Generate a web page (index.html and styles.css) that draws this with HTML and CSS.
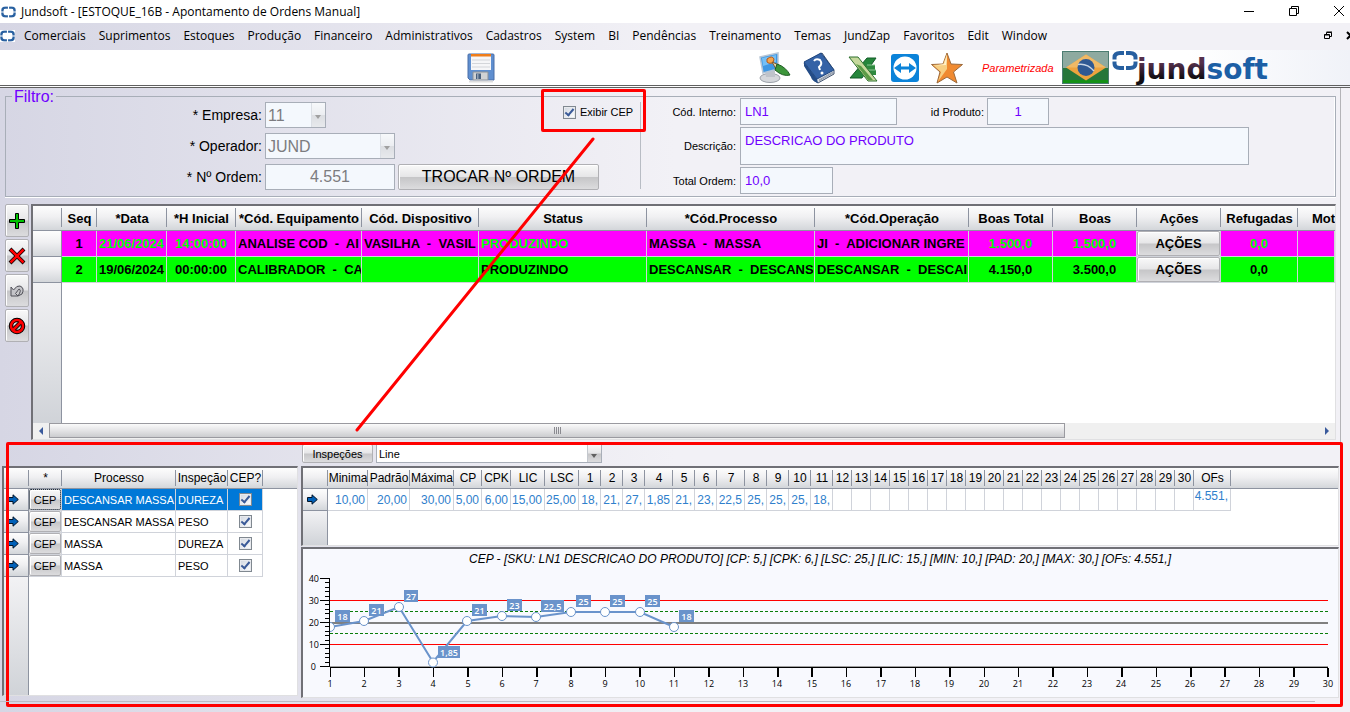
FILE: index.html
```html
<!DOCTYPE html>
<html lang="pt-BR">
<head>
<meta charset="utf-8">
<title>Jundsoft - [ESTOQUE_16B - Apontamento de Ordens Manual]</title>
<link rel="stylesheet" href="styles.css">
</head>
<body>
<svg class="defs" aria-hidden="true">
  <symbol id="ring" viewBox="0 0 26 20">
    <path d="M12 2.500H8Q2.500 2.500 2.500 7V9M2.500 11V13Q2.500 17.500 8 17.500H12M14 2.500H18Q23.500 2.500 23.500 7V9M23.500 11V13Q23.500 17.500 18 17.500H14" fill="none" stroke="#2860a0" stroke-width="4"/>
  </symbol>
  <symbol id="arrow" viewBox="0 0 11 11">
    <path d="M.5 3.500H5V.8L10.300 5.500 5 10.200V7.500H.5Z" fill="#0060b8" stroke="#001428"/>
  </symbol>
</svg>

<header class="titlebar">
  <svg class="ring-sm" viewBox="0 0 26 20"><use href="#ring"/></svg>
  <h1>Jundsoft - [ESTOQUE_16B - Apontamento de Ordens Manual]</h1>
  <div class="window-buttons">
    <button aria-label="Minimizar"><svg width="12" height="12" viewBox="0 0 12 12"><path d="M1 6.500H11" stroke="#000"/></svg></button>
    <button aria-label="Restaurar"><svg width="12" height="12" viewBox="0 0 12 12"><path d="M1.500 3.500H8.500V10.500H1.500ZM3.500 3V1.500H10.500V8.500H9" fill="none" stroke="#000"/></svg></button>
    <button aria-label="Fechar"><svg width="12" height="12" viewBox="0 0 12 12"><path d="M1 1L11 11M11 1L1 11" stroke="#000"/></svg></button>
  </div>
</header>

<nav class="menubar">
  <svg class="ring-sm boxed" viewBox="0 0 26 20"><use href="#ring"/></svg>
  <a href="#">Comerciais</a><a href="#">Suprimentos</a><a href="#">Estoques</a><a href="#">Produção</a><a href="#">Financeiro</a><a href="#">Administrativos</a><a href="#">Cadastros</a><a href="#">System</a><a href="#">BI</a><a href="#">Pendências</a><a href="#">Treinamento</a><a href="#">Temas</a><a href="#">JundZap</a><a href="#">Favoritos</a><a href="#">Edit</a><a href="#">Window</a>
  <div class="mdi-buttons">
    <button aria-label="Restaurar janela"><svg width="9" height="9" viewBox="0 0 9 9"><path d="M.5 3.500H5.500V7.500H.5ZM.5 4H5.500M2.500 3V1.500H7.500V5.500H6M2.500 1H8" fill="none" stroke="#000"/></svg></button>
    <button aria-label="Fechar janela"><svg width="9" height="9" viewBox="0 0 9 9"><path d="M1 1L8 8M8 1L1 8" stroke="#000" stroke-width="2"/></svg></button>
  </div>
</nav>

<div class="toolbar">
  <button class="save" aria-label="Salvar">
    <svg width="28" height="30" viewBox="0 0 28 30">
      <path d="M1 2Q1 1 2 1H26Q27 1 27 2V27H3L1 25Z" fill="#5f8fd0" stroke="#4a6fa8"/>
      <path d="M4 1H24V17H4Z" fill="#f6f6f8"/><path d="M4 1H24V3.500H4Z" fill="#ef7d1a"/>
      <path d="M5 7H23M5 10.500H23M5 14H23" stroke="#d4d6da"/>
      <path d="M6 19H21V27H6Z" fill="#d0d2d4" stroke="#8a9098"/><path d="M9 20.500H14V26H9Z" fill="#48607e"/><path d="M10 21H11.500V26H10Z" fill="#90a0b4"/>
      <path d="M2 28.500H26" stroke="#ddd" stroke-width="2"/>
    </svg>
  </button>
  <div class="apps">
    <button aria-label="Personalizar">
      <svg width="32" height="32" viewBox="0 0 32 32">
        <ellipse cx="11" cy="26" rx="10" ry="4.500" fill="#d5d7db" stroke="#9ba0a8"/>
        <path d="M6 19L16 18V25H7Z" fill="#bfc3ca"/>
        <path d="M1 5L19 1V17L4 21Z" fill="#3f97e2" stroke="#b7c6d6" stroke-width="1.500"/>
        <path d="M3 6L17 3V10L4 14Z" fill="#75bff5"/>
        <path d="M8 7Q13 3 15 7L14 11Q9 12 8 10Z" fill="#f4a64b" stroke="#b4571b"/>
        <path d="M13 10L20 13 17 17Z" fill="#e8d5a7" stroke="#805c33"/>
        <path d="M18 12Q27 15 31 23Q24 25 16 18Z" fill="#3d963b" stroke="#1f5c23"/>
      </svg>
    </button>
    <button aria-label="Ajuda">
      <svg width="32" height="32" viewBox="0 0 32 32">
        <path d="M1 11L19 1 31 18V22L15 31Q10 29 9 25Z" fill="#dde2ea" stroke="#43546e"/>
        <path d="M1 10L18 1 31 18 14 27Z" fill="#3462a6" stroke="#21477f"/>
        <path d="M1 10L14 27 15 31Q9 29 8 25L1 14Z" fill="#234c87"/>
        <path d="M16 29L30 21M16 28L30 20" stroke="#929caa"/>
        <path d="M11 9Q13 6 17 8Q20 12 16 15L17 18" fill="none" stroke="#fff" stroke-width="2"/><circle cx="19" cy="21" r="1.500" fill="#fff"/>
      </svg>
    </button>
    <button aria-label="Excel">
      <svg width="32" height="32" viewBox="0 0 32 32">
        <path d="M20 6H29L15 26H3Z" fill="#25863b" stroke="#125c28"/>
        <path d="M18 13H28V18H29V23H16Z" fill="#2f8a3f"/>
        <path d="M20 13H28M18 18H29" stroke="#8cc695"/>
        <path d="M2 5H11L30 29H21Z" fill="#c6d99d" stroke="#2e702e"/>
        <path d="M14 14L26 28H21L9 12Z" fill="#5b9b45"/>
      </svg>
    </button>
    <button aria-label="Acesso remoto">
      <svg width="28" height="28" viewBox="0 0 28 28">
        <rect width="28" height="28" rx="3" fill="#0b83d9"/><circle cx="14" cy="14" r="11.500" fill="#fff"/>
        <path d="M3 14L10 9V12.500H18V9L25 14 18 19V15.500H10V19Z" fill="#0b83d9"/>
      </svg>
    </button>
    <button aria-label="Favoritos">
      <svg width="32" height="32" viewBox="0 0 32 32">
        <path d="M16 1L20 12 31.500 12.500 22.500 20 26 31 16 25 6 31 9 20 .5 12.500 12 12Z" fill="#f08a30" stroke="#9b6a3c"/>
        <path d="M16 2V17L7 29.500 10 20 2 13 12 12.500Z" fill="#f7cf83"/><path d="M16 3L15 13 4 13.500 13 12Z" fill="#fff1c9"/>
      </svg>
    </button>
  </div>
  <span class="mode">Parametrizada</span>
  <svg class="flag" width="47" height="33" viewBox="0 0 47 33" role="img" aria-label="Brasil">
    <rect x=".5" y=".5" width="46" height="32" fill="#26763b" stroke="#4c7d72"/>
    <path d="M1 1H46V17H1Z" fill="#8eaaa0"/><path d="M1 29H46V32H1Z" fill="#159017"/>
    <path d="M4 16.500L24 3.500 44 16.500 24 29.500Z" fill="#eda33e"/><path d="M4 16.500L24 3.500 44 16.500Z" fill="#efb966"/>
    <circle cx="24" cy="16.500" r="8.500" fill="#2f5993"/><path d="M16 13.500Q25 12 32 20" fill="none" stroke="#c8d5e4" stroke-width="1.500"/>
  </svg>
  <svg class="logo" width="160" height="35" viewBox="0 0 160 35" role="img" aria-label="jundsoft">
    <defs><linearGradient id="ink" x1="0" y1="0" x2="0" y2="1"><stop offset=".3" stop-color="#54304c"/><stop offset=".75" stop-color="#130e14"/></linearGradient></defs>
    <use href="#ring" x="2" y="0" width="26" height="21"/>
    <text x="27" y="29" class="logo-text"><tspan fill="url(#ink)">jund</tspan><tspan fill="#1c5fa5">soft</tspan></text>
  </svg>
</div>

<main class="workspace">
  <fieldset class="filter">
    <legend>Filtro:</legend>
    <div class="filter-body">
      <div class="order-fields">
        <label for="empresa">* Empresa:</label>
        <span class="combo combo-sm"><select id="empresa" disabled><option>11</option></select></span>
        <label for="operador">* Operador:</label>
        <span class="combo combo-md"><select id="operador" disabled><option>JUND</option></select></span>
        <label for="ordem">* Nº Ordem:</label>
        <div class="pair">
          <input id="ordem" class="order-no" value="4.551" disabled>
          <button class="btn swap">TROCAR Nº ORDEM</button>
        </div>
      </div>
      <div class="cep-toggle">
        <label class="check-label"><input type="checkbox" class="check" checked>Exibir CEP</label>
      </div>
      <div class="product-fields">
        <label for="interno">Cód. Interno:</label>
        <div class="pair">
          <input id="interno" class="code" value="LN1">
          <label for="idprod" class="id-label">id Produto:</label>
          <input id="idprod" class="prod-id" value="1">
        </div>
        <label for="descricao">Descrição:</label>
        <textarea id="descricao">DESCRICAO DO PRODUTO</textarea>
        <label for="total">Total Ordem:</label>
        <input id="total" class="total" value="10,0">
      </div>
    </div>
  </fieldset>

  <div class="orders">
    <div class="side-buttons">
      <button class="btn" aria-label="Adicionar"><svg width="18" height="18" viewBox="0 0 18 18"><path d="M7.500 1.500H10.500V7.500H16.500V10.500H10.500V16.500H7.500V10.500H1.500V7.500H7.500Z" fill="#00c400" stroke="#000"/></svg></button>
      <button class="btn" aria-label="Excluir"><svg width="18" height="18" viewBox="0 0 18 18"><path d="M2 2L16 16M16 2L2 16" stroke="#000" stroke-width="4"/><path d="M2.500 2.500L15.500 15.500M15.500 2.500L2.500 15.500" stroke="#f00" stroke-width="2.500"/></svg></button>
      <button class="btn" aria-label="Desfazer"><svg width="18" height="18" viewBox="0 0 18 18"><path d="M3 5V14H10L7.500 11.500 11 7Q14 8 10 14L14 12Q17 6 12 4Q9 3 5.500 8Z" fill="#c4c4c8" stroke="#505058"/></svg></button>
      <button class="btn" aria-label="Cancelar"><svg width="18" height="18" viewBox="0 0 18 18"><circle cx="9" cy="9" r="6" fill="none" stroke="#000" stroke-width="4.500"/><path d="M5 13L13 5" stroke="#000" stroke-width="4.500"/><circle cx="9" cy="9" r="6" fill="none" stroke="#f00" stroke-width="2.500"/><path d="M5 13L13 5" stroke="#f00" stroke-width="2.500"/></svg></button>
    </div>
    <div class="grid orders-grid">
      <div class="grid-view">
      <table class="tbl tbl-orders">
        <colgroup><col class="w29"><col class="w35"><col class="w70"><col class="w69"><col class="w126"><col class="w117"><col class="w168"><col class="w168"><col class="w154"><col class="w84"><col class="w84"><col class="w84"><col class="w77"><col></colgroup>
        <thead><tr><th></th><th>Seq</th><th>*Data</th><th>*H Inicial</th><th>*Cód. Equipamento</th><th>Cód. Dispositivo</th><th>Status</th><th>*Cód.Processo</th><th>*Cód.Operação</th><th>Boas Total</th><th>Boas</th><th>Ações</th><th>Refugadas</th><th class="cut">Mot</th></tr></thead>
        <tbody>
          <tr class="running"><th></th><td class="mid">1</td><td class="mid hot">21/06/2024</td><td class="mid hot">14:00:00</td><td>ANALISE COD  -  AI</td><td>VASILHA  -  VASIL</td><td class="hot">PRODUZINDO</td><td>MASSA  -  MASSA</td><td>JI  -  ADICIONAR INGRE</td><td class="mid hot">1.500,0</td><td class="mid hot">1.500,0</td><td class="action"><button class="btn">AÇÕES</button></td><td class="mid hot">0,0</td><td></td></tr>
          <tr class="done"><th></th><td class="mid">2</td><td class="mid">19/06/2024</td><td class="mid">00:00:00</td><td>CALIBRADOR  -  CA</td><td></td><td>PRODUZINDO</td><td>DESCANSAR  -  DESCANS</td><td>DESCANSAR  -  DESCAI</td><td class="mid">4.150,0</td><td class="mid">3.500,0</td><td class="action"><button class="btn">AÇÕES</button></td><td class="mid">0,0</td><td></td></tr>
        </tbody>
      </table>
      <div class="gutter gutter-orders"></div>
      </div>
      <div class="scrollbar">
        <button aria-label="Rolar à esquerda"><svg width="6" height="8" viewBox="0 0 6 8"><path d="M5 0V8L1 4Z" fill="#3a5a9c"/></svg></button>
        <div class="track"><div class="thumb"><i></i><i></i><i></i><i></i></div></div>
        <button aria-label="Rolar à direita"><svg width="6" height="8" viewBox="0 0 6 8"><path d="M1 0V8L5 4Z" fill="#3a5a9c"/></svg></button>
      </div>
    </div>
  </div>
  <svg class="pointer" width="240" height="296" viewBox="0 0 240 296" aria-hidden="true"><path d="M238 3L2 294" stroke="#f00" stroke-width="3" stroke-linecap="round"/></svg>
</main>

<section class="cep">
  <div class="inspections grid">
    <div class="grid-view">
    <table class="tbl tbl-sm tbl-inspections">
      <colgroup><col class="w25"><col class="w33"><col class="w114"><col class="w52"><col class="w35"><col></colgroup>
      <thead><tr><th></th><th>*</th><th>Processo</th><th>Inspeção</th><th>CEP?</th><th></th></tr></thead>
      <tbody>
        <tr class="selected"><th><svg class="row-arrow" viewBox="0 0 11 11"><use href="#arrow"/></svg></th><td class="action"><button class="btn">CEP</button></td><td>DESCANSAR MASSA</td><td>DUREZA</td><td class="mid"><input type="checkbox" class="check" aria-label="CEP" checked></td><td class="blank"></td></tr>
        <tr><th><svg class="row-arrow" viewBox="0 0 11 11"><use href="#arrow"/></svg></th><td class="action"><button class="btn">CEP</button></td><td>DESCANSAR MASSA</td><td>PESO</td><td class="mid"><input type="checkbox" class="check" aria-label="CEP" checked></td><td class="blank"></td></tr>
        <tr><th><svg class="row-arrow" viewBox="0 0 11 11"><use href="#arrow"/></svg></th><td class="action"><button class="btn">CEP</button></td><td>MASSA</td><td>DUREZA</td><td class="mid"><input type="checkbox" class="check" aria-label="CEP" checked></td><td class="blank"></td></tr>
        <tr><th><svg class="row-arrow" viewBox="0 0 11 11"><use href="#arrow"/></svg></th><td class="action"><button class="btn">CEP</button></td><td>MASSA</td><td>PESO</td><td class="mid"><input type="checkbox" class="check" aria-label="CEP" checked></td><td class="blank"></td></tr>
      </tbody>
    </table>
    <div class="gutter gutter-sm"></div>
    </div>
  </div>

  <div class="cep-detail">
    <div class="detail-bar">
      <button class="btn">Inspeções</button>
      <span class="combo combo-lg"><select aria-label="Tipo de gráfico"><option>Line</option></select></span>
    </div>
    <div class="grid values">
      <div class="grid-view">
      <table class="tbl tbl-sm tbl-values">
        <colgroup><col class="w25"><col class="w40"><col class="w42"><col class="w44"><col class="w28"><col class="w29"><col class="w34" span="2"><col class="w22" span="3"><col class="w28"><col class="w22" span="2"><col class="w28"><col class="w22" span="4"><col class="w19" span="19"><col class="w37"><col></colgroup>
        <thead><tr><th></th><th>Minima</th><th>Padrão</th><th>Máxima</th><th>CP</th><th>CPK</th><th>LIC</th><th>LSC</th><th>1</th><th>2</th><th>3</th><th>4</th><th>5</th><th>6</th><th>7</th><th>8</th><th>9</th><th>10</th><th>11</th><th>12</th><th>13</th><th>14</th><th>15</th><th>16</th><th>17</th><th>18</th><th>19</th><th>20</th><th>21</th><th>22</th><th>23</th><th>24</th><th>25</th><th>26</th><th>27</th><th>28</th><th>29</th><th>30</th><th>OFs</th><th></th></tr></thead>
        <tbody><tr><th><svg class="row-arrow" viewBox="0 0 11 11"><use href="#arrow"/></svg></th><td>10,00</td><td>20,00</td><td>30,00</td><td>5,00</td><td>6,00</td><td>15,00</td><td>25,00</td><td>18,</td><td>21,</td><td>27,</td><td>1,85</td><td>21,</td><td>23,</td><td>22,5</td><td>25,</td><td>25,</td><td>25,</td><td>18,</td><td></td><td></td><td></td><td></td><td></td><td></td><td></td><td></td><td></td><td></td><td></td><td></td><td></td><td></td><td></td><td></td><td></td><td></td><td></td><td class="ofs">4.551,</td><td class="blank"></td></tr></tbody>
      </table>
      <div class="gutter gutter-sm"></div>
      </div>
    </div>
    <div class="grid chart">
      <svg class="plot" viewBox="303 549 1035 146" role="img" aria-label="Gráfico CEP">
        <text class="plot-title" x="820" y="563">CEP - [SKU: LN1 DESCRICAO DO PRODUTO] [CP: 5,] [CPK: 6,] [LSC: 25,] [LIC: 15,] [MIN: 10,] [PAD: 20,] [MAX: 30,] [OFs: 4.551,]</text>
        <g fill="none" shape-rendering="crispEdges">
          <path d="M330 600.500H1328M330 644.500H1328" stroke="#f00"/>
          <path d="M330 611.500H1328M330 633.500H1328" stroke="#0a7d0a" stroke-dasharray="3 2"/>
          <path d="M330 623H1328" stroke="#808080" stroke-width="2"/>
          <path d="M330 666.500H1328" stroke="#a0a0a0"/>
          <path d="M320 578.500H330M320 600.500H330M320 622.500H330M320 644.500H330M320 666.500H330M325 582.500H330M325 587.500H330M325 591.500H330M325 596.500H330M325 604.500H330M325 609.500H330M325 613.500H330M325 618.500H330M325 626.500H330M325 631.500H330M325 635.500H330M325 640.500H330M325 648.500H330M325 653.500H330M325 657.500H330M325 662.500H330M329.500 578V667M330 667.500H1328" stroke="#000"/>
          <path d="M330.500 668V677M364.500 668V677M399 668V677M433.500 668V677M468 668V677M502.500 668V677M537 668V677M571 668V677M605.500 668V677M640 668V677M674.500 668V677M709 668V677M743.500 668V677M778 668V677M812 668V677M846.500 668V677M881 668V677M915.500 668V677M950 668V677M984.500 668V677M1018.500 668V677M1053 668V677M1087.500 668V677M1122 668V677M1156.500 668V677M1191 668V677M1225 668V677M1259.500 668V677M1294 668V677M1328 668V677" stroke="#000" stroke-width="1.500"/>
        </g>
        <g class="axis-y"><text x="319" y="582">40</text><text x="319" y="604">30</text><text x="319" y="626">20</text><text x="319" y="648">10</text><text x="316" y="670">0</text></g>
        <g class="axis-x"><text x="330" y="687">1</text><text x="364" y="687">2</text><text x="399" y="687">3</text><text x="433" y="687">4</text><text x="468" y="687">5</text><text x="502" y="687">6</text><text x="536" y="687">7</text><text x="571" y="687">8</text><text x="605" y="687">9</text><text x="640" y="687">10</text><text x="674" y="687">11</text><text x="709" y="687">12</text><text x="743" y="687">13</text><text x="777" y="687">14</text><text x="812" y="687">15</text><text x="846" y="687">16</text><text x="881" y="687">17</text><text x="915" y="687">18</text><text x="949" y="687">19</text><text x="984" y="687">20</text><text x="1018" y="687">21</text><text x="1053" y="687">22</text><text x="1087" y="687">23</text><text x="1121" y="687">24</text><text x="1156" y="687">25</text><text x="1190" y="687">26</text><text x="1225" y="687">27</text><text x="1259" y="687">28</text><text x="1294" y="687">29</text><text x="1328" y="687">30</text></g>
        <clipPath id="area"><rect x="330" y="570" width="1000" height="100"/></clipPath>
        <g clip-path="url(#area)">
          <path d="M330 627L364 621 399 607 433 662 467 621 502 616 536 617 571 612 605 612 640 612 674 627" fill="none" stroke="#6a93cb" stroke-width="2"/>
          <g class="dots"><circle cx="330" cy="627" r="4.500"/><circle cx="364" cy="621" r="4.500"/><circle cx="399" cy="607" r="4.500"/><circle cx="433" cy="662.500" r="4.500"/><circle cx="467" cy="621" r="4.500"/><circle cx="502" cy="616" r="4.500"/><circle cx="536" cy="617" r="4.500"/><circle cx="571" cy="612" r="4.500"/><circle cx="605" cy="612" r="4.500"/><circle cx="640" cy="612" r="4.500"/><circle cx="674" cy="627" r="4.500"/></g>
        </g>
        <path d="M335 610h15v12h-15ZM369 604h15v12h-15ZM404 590h14v12h-14ZM438 646h22v12h-22ZM472 604h15v12h-15ZM507 599h15v12h-15ZM541 600h23v12h-23ZM576 595h15v12h-15ZM610 595h15v12h-15ZM645 595h15v12h-15ZM679 610h15v12h-15Z" fill="#6a93cb"/>
        <g class="tags"><text x="342.500" y="620">18</text><text x="376.500" y="614">21</text><text x="411" y="600">27</text><text x="449" y="656">1,85</text><text x="479.500" y="614">21</text><text x="514.500" y="609">23</text><text x="552.500" y="610">22,5</text><text x="583.500" y="605">25</text><text x="617.500" y="605">25</text><text x="652.500" y="605">25</text><text x="686.500" y="620">18</text></g>
      </svg>
    </div>
  </div>
  <div class="highlight" aria-hidden="true"></div>
</section>
</body>
</html>
```

FILE: styles.css
```css
*, *::before, *::after { box-sizing: border-box; }
:root {
  --ui: "Open Sans", "Noto Sans", sans-serif;
  --form: "Liberation Sans", Arial, sans-serif;
  --bevel: linear-gradient(#f9f9f9, #e6e6e8 48%, #c6c6c8 52%, #dcdcde);
  --head: linear-gradient(#fdfdfd, #f0f0f2 45%, #d3d6da);
  --field: #f4f8fd;
  --line: #a8aeb8;
}
body {
  margin: 0;
  min-height: 100vh;
  display: flex;
  flex-direction: column;
  overflow: hidden;
  background: linear-gradient(90deg, #d6d6e4, #f2f1f6 50%);
  font-family: var(--form);
  font-size: 12px;
  color: #000;
}
button, input, select, textarea { font: inherit; color: inherit; margin: 0; padding: 0; border: 0; }
button { background: none; display: flex; align-items: center; justify-content: center; white-space: nowrap; }
svg { display: block; flex: none; }
.defs { position: absolute; width: 0; height: 0; }

.titlebar { height: 23px; display: flex; align-items: center; background: #fff; font-family: var(--ui); }
.ring-sm { width: 15px; height: 12px; }
.titlebar .ring-sm { margin-left: 1px; }
.titlebar h1 { margin: 0 0 0 5px; font-size: 12px; font-weight: 400; }
.window-buttons { margin-left: auto; display: flex; gap: 33px; padding-right: 5px; padding-bottom: 2px; }
.menubar { height: 27px; display: flex; align-items: center; gap: 13px; font-family: var(--ui); font-size: 12px; padding-bottom: 2px; }
.menubar a { color: #000; text-decoration: none; }
.menubar .ring-sm { margin-right: -4px; background: #fff; }
.mdi-buttons { margin-left: auto; display: flex; gap: 13px; margin-right: -5px; }

.toolbar {
  height: 38px;
  display: flex;
  align-items: center;
  padding-left: 467px;
  background: linear-gradient(90deg, #fff 88%, #f0f2f8);
  border-bottom: 3px double #606060;
}
.apps { display: flex; align-items: center; gap: 12px; margin-left: 264px; }
.mode { margin-left: 19px; width: 80px; color: #f00; font-size: 11px; font-style: italic; }
.logo { margin-left: 1px; }
.logo-text { font: bold 28px "DejaVu Sans", sans-serif; }

.workspace {
  position: relative;
  height: 354px;
  margin-right: 9px;
  padding: 0 4px 0 5px;
  border-right: 1px solid #b4b4b8;
}
.filter { margin: 0; padding: 0; height: 109px; border: 1px solid var(--line); box-shadow: inset -1px 0 #fff, 0 1px #fff; }
.filter legend { margin-left: 6px; padding: 0 2px; line-height: 17px; font-size: 16px; color: #7000ff; }
.filter-body { display: flex; margin-top: -7px; }
.order-fields { display: grid; grid-template-columns: 256px 1fr; grid-auto-rows: 26px; gap: 5px 3px; width: 595px; padding-top: 4px; font-size: 16px; }
.order-fields label { font-size: 14px; text-align: right; align-self: center; }
.pair { display: flex; align-items: center; gap: 3px; }
.order-fields input, .product-fields input, .product-fields textarea {
  background: var(--field); border: 1px solid var(--line); border-radius: 0; height: 100%;
}
.order-no { width: 130px; text-align: center; }
.combo { position: relative; display: block; height: 100%; }
.combo select { width: 100%; height: 100%; appearance: none; border: 1px solid var(--line); border-radius: 0; padding-left: 2px; background: #fff; }
.combo::before { content: ""; position: absolute; right: 1px; top: 1px; bottom: 1px; width: 14px; background: var(--bevel); border-left: 1px solid #c4c8ce; }
.combo::after { content: ""; position: absolute; right: 5px; top: 50%; border: 3px solid transparent; border-top: 4px solid #606060; border-bottom: 0; }
.order-fields select { background: var(--field); }
.order-fields :disabled { color: #7c7c80; opacity: 1; }
.order-fields .combo::before { opacity: .5; }
.order-fields .combo::after { border-top-color: #a0a0a0; }
.combo-sm { width: 61px; }
.combo-md { width: 130px; }
.combo-lg { width: 226px; }
.btn { background: var(--bevel); border: 1px solid #b0b0b4; border-radius: 2px; box-shadow: inset 1px 1px #fff; }
.swap { width: 201px; height: 100%; }
.cep-toggle {
  position: relative; z-index: 1; width: 40px; height: 87px; margin-top: 4px; border-right: 1px solid #b8bcc4;
  font-size: 11px;
}
.cep-toggle::before { content: ""; position: absolute; left: -60px; top: -13px; width: 105px; height: 43px; border: 3px solid #f00; border-radius: 2px; }
.check-label { position: relative; display: flex; align-items: center; gap: 4px; height: 20px; margin-left: -38px; width: 75px; white-space: nowrap; }
.check { appearance: none; width: 13px; height: 13px; background: linear-gradient(135deg, #d0d6e0, #fff); border: 1px solid #808890; outline: 1px solid #e8eaee; outline-offset: -2px; flex: none; display: grid; place-items: center; }
.check:checked::before { content: ""; width: 5px; height: 9px; margin-bottom: 2px; border: solid #3a5a98; border-width: 0 2px 2px 0; transform: rotate(40deg); }
.product-fields { display: grid; grid-template-columns: 95px 1fr; grid-template-rows: 27px 38px 27px; gap: 2px 4px; width: 608px; font-size: 11px; }
.product-fields label { text-align: right; align-self: center; white-space: nowrap; }
.product-fields input, .product-fields textarea { font-size: 13px; color: #7000ff; padding: 0 4px; }
.product-fields textarea { padding-top: 5px; resize: none; width: 509px; overflow: hidden; }
.product-fields .code { width: 157px; }
.product-fields .id-label { margin-left: 30px; width: 54px; }
.product-fields .prod-id { width: 62px; text-align: center; }
.product-fields .total { width: 93px; }
.product-fields .pair { height: 27px; }

.orders { display: flex; gap: 2px; margin-top: 7px; height: 236px; }
.side-buttons { display: flex; flex-direction: column; gap: 2px; width: 24px; flex: none; }
.side-buttons .btn { height: 33px; }
.grid { background: #fff; border: 2px solid #707076; border-right: 1px solid #e0e0e2; border-bottom: 1px solid #e0e0e2; min-width: 0; display: flex; flex-direction: column; overflow: hidden; }
.orders-grid { flex: 1; }
.grid-view { flex: 1; min-height: 0; display: flex; flex-direction: column; overflow: hidden; }
.gutter { flex: 1; background: linear-gradient(#f2f2f4, #d0d3d8); border-right: 1px solid #8d93a0; }
.gutter-orders { width: 29px; }
.gutter-sm { width: 25px; }

.w19 { width: 19px; }
.w22 { width: 22px; }
.w25 { width: 25px; }
.w28 { width: 28px; }
.w29 { width: 29px; }
.w33 { width: 33px; }
.w34 { width: 34px; }
.w35 { width: 35px; }
.w37 { width: 37px; }
.w40 { width: 40px; }
.w42 { width: 42px; }
.w44 { width: 44px; }
.w52 { width: 52px; }
.w69 { width: 69px; }
.w70 { width: 70px; }
.w77 { width: 77px; }
.w84 { width: 84px; }
.w114 { width: 114px; }
.w117 { width: 117px; }
.w126 { width: 126px; }
.w154 { width: 154px; }
.w168 { width: 168px; }

.tbl { table-layout: fixed; width: 100%; border-collapse: separate; border-spacing: 0; }
.tbl th, .tbl td { padding: 0 0 0 2px; overflow: hidden; white-space: pre; text-align: left; border-right: 1px solid #d0d3da; border-bottom: 1px solid #d0d3da; font-weight: inherit; }
.tbl thead th { text-align: center; padding: 0; background: linear-gradient(#8d93a0, #8d93a0) right center / 1px 80% no-repeat, var(--head); border-right: 0; border-bottom: 1px solid #8d93a0; }
.tbl thead th:last-child { background: var(--head); }
.tbl tbody th { background: var(--head); border-right: 1px solid #8d93a0; border-bottom-color: #8d93a0; }
.tbl .mid { text-align: center; padding: 0; }
.tbl .action { padding: 0; background: #e4e4e6; }
.tbl .btn { width: 100%; height: 100%; }
.tbl-orders { font-size: 13px; font-weight: bold; }
.tbl-orders thead tr { height: 25px; }
.tbl-orders tbody tr { height: 26px; }
.tbl-orders .btn { height: 25px; }
.tbl-orders thead .cut { text-align: left; padding-left: 14px; }
.running td { background: #f0f; }
.done td { background: #0f0; }
.running .hot { color: #0f0; }
.tbl-sm { font-size: 12px; }
.tbl-sm thead tr { height: 21px; }
.tbl-sm tbody tr { height: 22px; }
.tbl-sm .btn { height: 21px; }
.tbl-sm .check { margin: 0 auto; }
.tbl-inspections tbody { font-size: 11px; }
.tbl .blank { border: 0; background: #fff; }
.selected td { background: #0078d7; color: #fff; }
.selected .btn { color: #000; outline: 1px dotted #203040; outline-offset: -1px; }
.row-arrow { width: 11px; height: 11px; margin-left: 2px; }
.tbl-values tbody td { color: #2f80cc; text-align: right; padding: 0 2px 0 0; }
.tbl-values tbody .ofs { vertical-align: top; }

.scrollbar { display: flex; height: 16px; background: #f0f0f0; }
.scrollbar button { width: 16px; }
.track { flex: 1; }
.thumb { width: 80%; height: 15px; display: flex; align-items: center; justify-content: center; gap: 1px; background: linear-gradient(#fafafa, #e4e4e6 50%, #cbcccf); border: 1px solid #9a9aa0; }
.thumb i { width: 1px; height: 7px; background: #8a8a90; }
.pointer { position: absolute; left: 355px; top: 48px; z-index: 2; }

.cep { position: relative; flex: 1; display: flex; gap: 3px; padding: 2px 11px 14px 2px; }
.inspections { width: 296px; flex: none; margin-top: 22px; margin-bottom: 2px; }
.cep-detail { flex: 1; min-width: 0; display: flex; flex-direction: column; }
.detail-bar { display: flex; gap: 3px; height: 19px; margin-left: 1px; font-size: 11px; }
.detail-bar .btn { width: 71px; }
.values { height: 80px; margin-top: 3px; }
.chart { margin-top: 1px; flex: 1; background: #f8f9fe; }
.plot { width: 100%; height: auto; }
.plot-title { font: italic 12px var(--form); text-anchor: middle; }
.axis-x, .axis-y, .tags { font: 9px var(--ui); text-anchor: middle; }
.axis-y { text-anchor: end; }
.tags { font-weight: 600; fill: #fff; }
.dots { fill: #fff; stroke: #6a93cb; }
.highlight { position: absolute; inset: 0 7px 5px 6px; border: 3px solid #f00; border-radius: 2px; pointer-events: none; }
.cep::after { content: ""; position: absolute; left: 0; right: 35px; bottom: 10px; height: 1px; background: #bcbcc4; }
```
